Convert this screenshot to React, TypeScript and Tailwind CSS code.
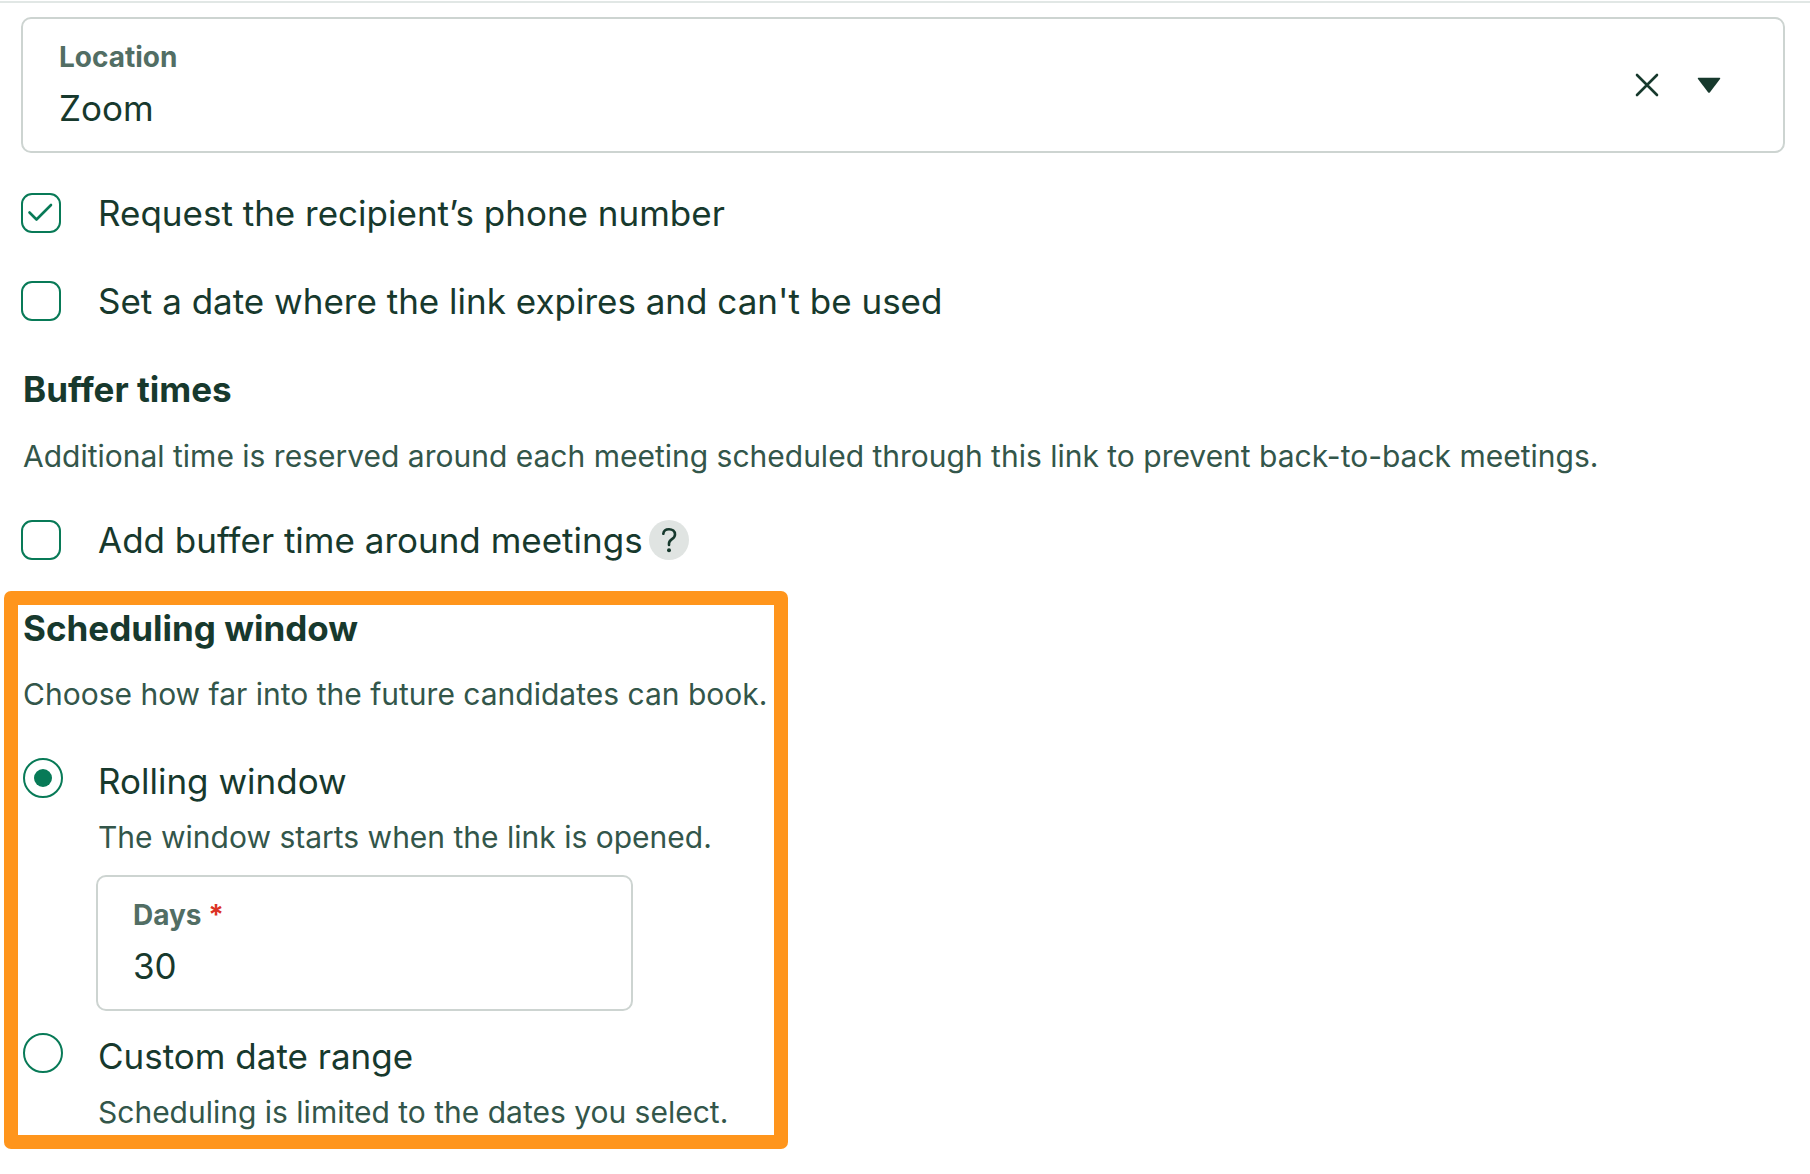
import { useState } from 'react';
import type { ReactNode } from 'react';

function CheckOption({
  id,
  label,
  defaultChecked,
  children,
}: {
  id: string;
  label: string;
  defaultChecked?: boolean;
  children?: ReactNode;
}) {
  return (
    <div className="flex items-center">
      <span className="relative size-10 shrink-0">
        <input
          id={id}
          type="checkbox"
          defaultChecked={defaultChecked}
          className="peer block size-10 appearance-none rounded-[11px] border-2 border-[#087a57] bg-white"
        />
        <svg
          viewBox="0 0 40 40"
          fill="none"
          stroke="#087a57"
          strokeWidth="2.6"
          strokeLinecap="round"
          strokeLinejoin="round"
          className="pointer-events-none absolute inset-0 hidden peer-checked:block"
        >
          <path d="M8.5 19.5l7 7L30 12" />
        </svg>
      </span>
      <label htmlFor={id} className="ml-[37px] text-[35px] leading-10">
        {label}
      </label>
      {children}
    </div>
  );
}

function RadioOption({
  id,
  label,
  hint,
  checked,
  onSelect,
  children,
}: {
  id: string;
  label: string;
  hint: string;
  checked: boolean;
  onSelect: () => void;
  children?: ReactNode;
}) {
  return (
    <div className="flex items-start">
      <span className="relative size-10 shrink-0">
        <input
          id={id}
          type="radio"
          name="scheduling-window"
          checked={checked}
          onChange={onSelect}
          aria-describedby={`${id}-hint`}
          className="peer block size-10 appearance-none rounded-full border-2 border-[#087a57] bg-white"
        />
        <span className="pointer-events-none absolute inset-[11px] hidden rounded-full bg-[#087a57] peer-checked:block" />
      </span>
      <div className="ml-[33px] min-w-0 flex-1 pt-[3px]">
        <label htmlFor={id} className="ml-[2px] block text-[35px] leading-10">
          {label}
        </label>
        <p id={`${id}-hint`} className="mt-4 ml-[2px] text-[30px] leading-10 text-[#33564a]">
          {hint}
        </p>
        {children}
      </div>
    </div>
  );
}

export default function App() {
  const [location, setLocation] = useState('Zoom');
  const [mode, setMode] = useState<'rolling' | 'custom'>('rolling');
  const [days, setDays] = useState('30');

  return (
    <main className="min-h-screen bg-white pt-px font-['Inter',sans-serif] text-[#17392d]">
      <hr className="border-t-2 border-[#e1e7e5]" />
      <form className="pt-[14px]">
        <div className="mr-[25px] ml-[21px] flex items-center rounded-[10px] border-2 border-[#cdd4d1] pt-[22px] pr-[62px] pb-[23px] pl-9">
          <div className="flex-1">
            <label htmlFor="location" className="block text-[28px] leading-8 font-bold text-[#526e64]">
              Location
            </label>
            <select
              id="location"
              value={location}
              onChange={(e) => setLocation(e.target.value)}
              className="mt-[15px] block h-10 w-full appearance-none bg-transparent text-[35px] leading-10"
            >
              <option value="" />
              <option value="Zoom">Zoom</option>
            </select>
          </div>
          <button type="button" aria-label="Clear location" onClick={() => setLocation('')}>
            <svg width="24" height="24" viewBox="0 0 24 24" stroke="#17392d" strokeWidth="2.6" strokeLinecap="round">
              <path d="M2 2l20 20M22 2L2 22" />
            </svg>
          </button>
          <svg width="24" height="24" viewBox="0 0 24 24" fill="#17392d" className="ml-[38px]">
            <path d="M1.500 4.800h21q1.400 0 .5 1.300L13 19.200q-1 1.200-2 0L1 6.100q-.9-1.300.5-1.300z" />
          </svg>
        </div>

        <div className="mt-10 ml-[21px] flex flex-col gap-12">
          <CheckOption id="phone" label="Request the recipient’s phone number" defaultChecked />
          <CheckOption id="expires" label="Set a date where the link expires and can't be used" />
        </div>

        <section className="mt-12 ml-[21px]">
          <h2 className="ml-[2px] text-[35px] leading-10 font-bold">Buffer times</h2>
          <p className="mt-[27px] mb-11 ml-[2px] text-[30px] leading-10 text-[#33564a]">
            Additional time is reserved around each meeting scheduled through this link to prevent back-to-back
            meetings.
          </p>
          <CheckOption id="buffer" label="Add buffer time around meetings">
            <button
              type="button"
              aria-label="About buffer time"
              className="ml-[6px] flex size-10 items-center justify-center rounded-full bg-[#e0e4e2]"
            >
              <svg width="40" height="40" viewBox="0 0 40 40" fill="none" stroke="#17392d" strokeWidth="2.6" strokeLinecap="round">
                <path d="M14.300 13.800C14.600 10.800 17 9.200 20 9.200c3.400 0 6 2 6 5.200 0 5.200-6 4.200-6 9.200v1.400" />
                <circle cx="20" cy="30.200" r="2" fill="#17392d" stroke="none" />
              </svg>
            </button>
          </CheckOption>
        </section>

        <section className="mt-[31px] ml-1 w-fit rounded-[7px] bg-[#ff951c] p-[14px]">
          <div className="bg-white pt-[3px] pr-[7px] pb-[3px] pl-[5px]">
            <h2 className="text-[35px] leading-10 font-bold">Scheduling window</h2>
            <p className="mt-[26px] mb-11 text-[30px] leading-10 text-[#33564a]">
              Choose how far into the future candidates can book.
            </p>
            <div className="flex flex-col gap-[22px]">
              <RadioOption
                id="rolling"
                label="Rolling window"
                hint="The window starts when the link is opened."
                checked={mode === 'rolling'}
                onSelect={() => setMode('rolling')}
              >
                <div className="mt-[18px] w-[537px] rounded-[10px] border-2 border-[#cdd4d1] pt-[22px] pr-9 pb-[23px] pl-[35px]">
                  <label htmlFor="days" className="block text-[28px] leading-8 font-bold text-[#526e64]">
                    Days <span className="text-[#dc3224]">*</span>
                  </label>
                  <input
                    id="days"
                    type="text"
                    inputMode="numeric"
                    required
                    value={days}
                    onChange={(e) => setDays(e.target.value)}
                    className="mt-[15px] block h-10 w-full bg-transparent text-[35px] leading-10 outline-none"
                  />
                </div>
              </RadioOption>
              <RadioOption
                id="custom"
                label="Custom date range"
                hint="Scheduling is limited to the dates you select."
                checked={mode === 'custom'}
                onSelect={() => setMode('custom')}
              />
            </div>
          </div>
        </section>
      </form>
    </main>
  );
}
